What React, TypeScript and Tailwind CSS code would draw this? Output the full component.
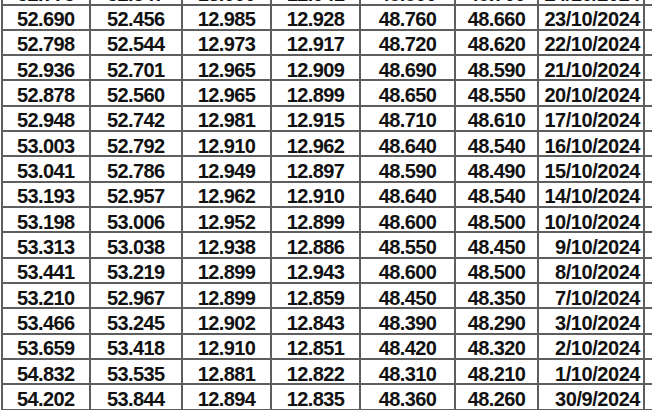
const rows: string[][] = [
  ['52.775', '52.547', '13.000', '12.941', '48.800', '48.700', '24/10/2024'],
  ['52.690', '52.456', '12.985', '12.928', '48.760', '48.660', '23/10/2024'],
  ['52.798', '52.544', '12.973', '12.917', '48.720', '48.620', '22/10/2024'],
  ['52.936', '52.701', '12.965', '12.909', '48.690', '48.590', '21/10/2024'],
  ['52.878', '52.560', '12.965', '12.899', '48.650', '48.550', '20/10/2024'],
  ['52.948', '52.742', '12.981', '12.915', '48.710', '48.610', '17/10/2024'],
  ['53.003', '52.792', '12.910', '12.962', '48.640', '48.540', '16/10/2024'],
  ['53.041', '52.786', '12.949', '12.897', '48.590', '48.490', '15/10/2024'],
  ['53.193', '52.957', '12.962', '12.910', '48.640', '48.540', '14/10/2024'],
  ['53.198', '53.006', '12.952', '12.899', '48.600', '48.500', '10/10/2024'],
  ['53.313', '53.038', '12.938', '12.886', '48.550', '48.450', '9/10/2024'],
  ['53.441', '53.219', '12.899', '12.943', '48.600', '48.500', '8/10/2024'],
  ['53.210', '52.967', '12.899', '12.859', '48.450', '48.350', '7/10/2024'],
  ['53.466', '53.245', '12.902', '12.843', '48.390', '48.290', '3/10/2024'],
  ['53.659', '53.418', '12.910', '12.851', '48.420', '48.320', '2/10/2024'],
  ['54.832', '53.535', '12.881', '12.822', '48.310', '48.210', '1/10/2024'],
  ['54.202', '53.844', '12.894', '12.835', '48.360', '48.260', '30/9/2024'],
]

export default function App() {
  return (
    <div className="w-[652px] h-[410px] overflow-hidden bg-white pl-[1px] font-['Liberation_Sans',Arial,sans-serif] font-bold text-[20px] text-[#111]">
      <div className="mt-[-19.83px]">
        {rows.map((r, i) => (
          <div
            key={i}
            className="grid grid-cols-[87.5px_92.5px_89px_89px_95px_83px_108px] h-[25.33px] border-b-2 border-[#5e5e5e]"
          >
            {r.map((v, j) => (
              <div
                key={j}
                className={
                  j === 6
                    ? 'flex items-center justify-end pt-[3.5px] pr-[3px] border-l-2 border-r-2 border-[#5e5e5e] leading-none tracking-[-0.45px]'
                    : 'flex items-center justify-center pt-[3.5px] border-l-2 border-[#5e5e5e] leading-none tracking-[-0.6px]'
                }
              >
                {v}
              </div>
            ))}
          </div>
        ))}
      </div>
    </div>
  )
}
